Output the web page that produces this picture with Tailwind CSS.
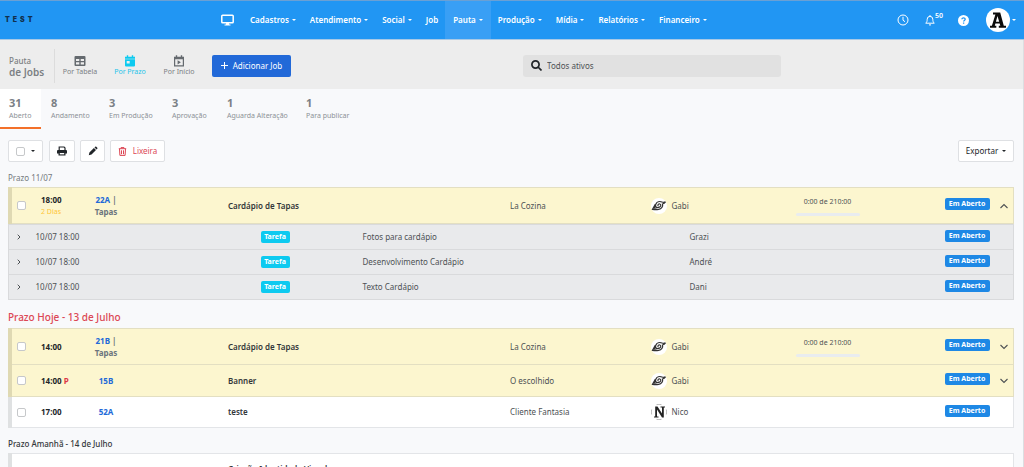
<!DOCTYPE html>
<html lang="pt-BR">
<head>
<meta charset="utf-8">
<meta name="viewport" content="width=device-width, initial-scale=1">
<title>Pauta de Jobs</title>
<script src="https://cdn.jsdelivr.net/npm/@tailwindcss/browser@4"></script>
</head>
<body class="bg-[#f8f9fb] font-['Noto_Sans','Open_Sans',sans-serif] text-[8px] leading-[12px] text-[#4d5154]">

<svg class="hidden" aria-hidden="true">
  <symbol id="caret" viewBox="0 0 4 2"><path d="M0 0h4L2 2z" fill="currentColor"/></symbol>
  <symbol id="down" viewBox="0 0 8 6"><path d="M.5 1 4 4.500 7.500 1" fill="none" stroke="currentColor" stroke-width="1.1"/></symbol>
  <symbol id="up" viewBox="0 0 8 6"><path d="M.5 5 4 1.500 7.500 5" fill="none" stroke="currentColor" stroke-width="1.1"/></symbol>
  <symbol id="right" viewBox="0 0 4 6"><path d="M.7.700 3 3 .7 5.300" fill="none" stroke="currentColor" stroke-width="1"/></symbol>
  <symbol id="leaf" viewBox="0 0 16 16">
    <circle cx="8" cy="8" r="8" fill="#fff"/>
    <path d="M4.300 6.200 1.500 11.400c2 .3 4.300.3 6.100 0 3-.6 4.600-3 3.900-5.400 1.200-.3 2.200-1 3-2.200-1.200.8-2.400.7-3.600.2C8.600 3.100 5.800 3.800 4.800 6.300c-.6 1.500 0 3 1.500 3.200 1.700.3 3.500-.9 3.500-2.300 0-1.300-1.700-1.600-2.500-.8-.6.6-.5 1.400.2 1.500M4.100 8.200 3.200 10.200c1.200.1 2.200 0 2.900-.6" fill="none" stroke="#333" stroke-width="1.200"/>
  </symbol>
</svg>

<header class="flex h-10 items-stretch border-t border-b border-t-[#6aa0d4] border-b-[#a9c9e6] bg-[#2196f3] font-semibold text-white">
  <a href="#" class="flex w-[213px] items-center pl-[5px] font-['Inter',sans-serif] text-[7px] font-black tracking-[3px] text-[#12304d]">TEST</a>
  <nav class="flex flex-1 items-stretch">
    <a href="#" aria-label="Painel" class="flex w-[29px] items-center pl-2">
      <svg class="h-3 w-[13px]" viewBox="0 0 13 12"><rect x=".8" y="1.300" width="11.400" height="7.400" rx=".8" fill="none" stroke="#fff" stroke-width="1.500"/><path d="M5.300 8.500h2.400l.5 2.100H9.500v1h-6v-1h1.300z" fill="#fff"/></svg>
    </a>
    <a href="#" class="flex items-center gap-[3px] pr-[7px] pl-2">Cadastros<svg class="h-[2px] w-1"><use href="#caret"/></svg></a>
    <a href="#" class="flex items-center gap-[3px] px-[7px]">Atendimento<svg class="h-[2px] w-1"><use href="#caret"/></svg></a>
    <a href="#" class="flex items-center gap-[3px] px-[7px]">Social<svg class="h-[2px] w-1"><use href="#caret"/></svg></a>
    <a href="#" class="flex items-center px-[7px]">Job</a>
    <a href="#" class="flex items-center gap-[3px] bg-[#399ff5] px-2">Pauta<svg class="h-[2px] w-1"><use href="#caret"/></svg></a>
    <a href="#" class="flex items-center gap-[3px] px-[7px]">Produção<svg class="h-[2px] w-1"><use href="#caret"/></svg></a>
    <a href="#" class="flex items-center gap-[3px] px-[7px]">Mídia<svg class="h-[2px] w-1"><use href="#caret"/></svg></a>
    <a href="#" class="flex items-center gap-[3px] px-[7px]">Relatórios<svg class="h-[2px] w-1"><use href="#caret"/></svg></a>
    <a href="#" class="flex items-center gap-[3px] px-[7px]">Financeiro<svg class="h-[2px] w-1"><use href="#caret"/></svg></a>
  </nav>
  <div class="flex items-center pr-2">
    <button aria-label="Histórico" class="w-7"><svg class="size-3" viewBox="0 0 12 12" fill="none" stroke="#fff"><circle cx="6" cy="6" r="5"/><path d="M6 2.800v3.400l2 1.500"/></svg></button>
    <button aria-label="Notificações" class="flex w-[33px] items-center"><svg class="h-3 w-[10px]" viewBox="0 0 10 12" fill="none" stroke="#fff"><path d="M.7 9.200c1.100-1 1.500-2 1.500-4a2.800 2.800 0 0 1 5.600 0c0 2 .4 3 1.500 4zM4 10.900h2M5 1v1.300"/></svg><span class="pb-2 text-[7px] leading-[8px]">50</span></button>
    <button aria-label="Ajuda" class="flex w-[28px] items-center"><svg class="size-[11px]" viewBox="0 0 11 11"><circle cx="5.500" cy="5.500" r="5.500" fill="#fff"/><path d="M3.900 4.300c0-2 3.300-2 3.300 0 0 1.100-1.600 1.200-1.600 2.300M5.600 7.500v1.200" stroke="#2196f3" stroke-width="1.300" fill="none"/></svg></button>
    <button aria-label="Conta" class="flex items-center gap-[2px]"><span class="flex size-6 items-center justify-center rounded-full bg-white"><svg class="h-[18px] w-4" viewBox="0 0 16 18" fill="#0b0b0b"><path fill-rule="evenodd" d="M3 1.500h7.200l3.600 13.300H16v2H8.800v-2h1.500l-.6-2.300H5.400l-.6 2.300h1.500v2H0v-2h1.900L5.400 3.400H3zM7.500 5l-1.600 5.700h3.300z"/></svg></span><svg class="h-[2px] w-1"><use href="#caret"/></svg></button>
  </div>
</header>

<div class="border-r border-[#dcdee1]">
<div class="flex h-[49px] items-center bg-[#ededed] pt-[2px] text-[#7b7f83]">
  <h1 class="ml-[9px] w-[45px] font-medium">Pauta<span class="block text-[10px] leading-[10px] font-semibold">de Jobs</span></h1>
  <div class="h-[34px] w-px bg-[#dcdcdc]"></div>
  <a href="#" class="ml-2 flex w-[34px] flex-col items-center text-[7px] leading-[10px] whitespace-nowrap"><svg class="size-3" viewBox="0 0 12 12"><path fill-rule="evenodd" d="M1.500 1h9q1 0 1 1v8q0 1-1 1h-9q-1 0-1-1V2q0-1 1-1zM2 4v2h3.300V4zM6.700 4v2H10V4zM2 7.300v2.200h3.300V7.300zM6.700 7.300v2.200H10V7.300z" fill="#656a6f"/></svg>Por Tabela</a>
  <a href="#" class="ml-[16px] flex w-[34px] flex-col items-center text-[7px] leading-[10px] whitespace-nowrap text-[#25c4ea]"><svg class="size-3" viewBox="0 0 12 12"><path d="M1 1.700h1.800V.3h1.400v1.400h3.600V.3h1.400v1.400H11v2H1zM1 4.300h10V10.500q0 1-1 1H2q-1 0-1-1z" fill="#0dcaf0"/><path d="M2.700 6h3v2.500h-3z" fill="#ededed"/></svg>Por Prazo</a>
  <a href="#" class="ml-[15px] flex w-[34px] flex-col items-center text-[7px] leading-[10px] whitespace-nowrap"><svg class="size-3" viewBox="0 0 12 12"><path d="M1.600 3.500h8.800v7.400H1.600z" fill="none" stroke="#656a6f" stroke-width="1.200"/><path d="M1 1.700h1.800V.3h1.400v1.400h3.600V.3h1.400v1.400H11v2.500H1zM4.600 5.200l3.300 2.100-3.300 2.100z" fill="#656a6f"/></svg>Por Início</a>
  <button class="ml-[16px] flex h-[22px] w-[79px] items-center justify-center gap-[5px] rounded-[2px] bg-[#2269d8] text-white whitespace-nowrap"><svg class="size-[7px]" viewBox="0 0 7 7"><path d="M3.500 0v7M0 3.500h7" stroke="#fff"/></svg>Adicionar Job</button>
  <label class="mr-[242px] ml-auto flex h-[22px] w-[258px] items-center gap-[5px] rounded-[3px] bg-[#e1e1e1] px-2"><svg class="size-[11px]" viewBox="0 0 11 11" fill="none" stroke="#212529" stroke-width="1.700"><circle cx="4.500" cy="4.500" r="3.600"/><path d="m7 7 3.500 3.500"/></svg><input type="text" aria-label="Buscar" value="Todos ativos" class="min-w-0 flex-1 bg-transparent text-[#4d5154] outline-none"></label>
</div>

<nav class="flex h-10 text-[7px] leading-[12px] text-[#8c9196]">
  <a href="#" class="mr-[10px] w-[41px] border-b-2 border-[#f3702a] bg-white pt-[7px] pl-[9px]"><b class="block text-[11px] leading-[14px] text-[#7b8085]">31</b>Aberto</a>
  <a href="#" class="w-[58px] pt-[7px]"><b class="block text-[11px] leading-[14px] text-[#7b8085]">8</b>Andamento</a>
  <a href="#" class="w-[63px] pt-[7px]"><b class="block text-[11px] leading-[14px] text-[#7b8085]">3</b>Em Produção</a>
  <a href="#" class="w-[55px] pt-[7px]"><b class="block text-[11px] leading-[14px] text-[#7b8085]">3</b>Aprovação</a>
  <a href="#" class="w-[79px] pt-[7px]"><b class="block text-[11px] leading-[14px] text-[#7b8085]">1</b>Aguarda Alteração</a>
  <a href="#" class="pt-[7px]"><b class="block text-[11px] leading-[14px] text-[#7b8085]">1</b>Para publicar</a>
</nav>

<main class="pr-[9px] pl-2">
  <div class="mt-[11px] flex h-[22px] items-stretch text-[#212529]">
    <div class="flex w-[35px] items-center gap-[6px] rounded-[2px] border border-[#dee0e3] bg-white pl-[7px]"><input type="checkbox" aria-label="Selecionar todos" class="size-[9px] appearance-none rounded-[2px] border border-[#c6c8ca] bg-white"><button aria-label="Opções de seleção"><svg class="h-[2px] w-1"><use href="#caret"/></svg></button></div>
    <button aria-label="Imprimir" class="ml-[6px] flex w-[26px] items-center justify-center rounded-[2px] border border-[#dee0e3] bg-white"><svg class="size-[10px]" viewBox="0 0 10 10"><path d="M2.200 4V1h4.900l.9.900V4" fill="none" stroke="#212529" stroke-width="1.200"/><path d="M0 5q0-1 1-1h8q1 0 1 1v2.500H8.500V9.500h-7V7.500H0z" fill="#212529"/><path d="M2.800 7h4.400v1.400H2.800z" fill="#fff"/></svg></button>
    <button aria-label="Editar" class="ml-[5px] flex w-[25px] items-center justify-center rounded-[2px] border border-[#dee0e3] bg-white"><svg class="size-[10px]" viewBox="0 0 10 10" fill="#212529"><path d="M.8 9.200 1.400 6.500 5.900 2l2.100 2.100-4.500 4.500zM6.500 1.400l.7-.7q.6-.4 1.100 0l1 1q.4.500 0 1.100l-.7.700z"/></svg></button>
    <button class="ml-[5px] flex w-[55px] items-center justify-center gap-[6px] rounded-[2px] border border-[#dee0e3] bg-white text-[#dc4754]"><svg class="size-[9px]" viewBox="0 0 9 9" fill="none" stroke="#dc4754"><path d="M.8 1.700h7.400M3 1.500V.6h3v.9M1.500 2l.4 6.400h5.200L7.500 2M3.500 3.300v3.900M5.500 3.300v3.900"/></svg>Lixeira</button>
    <button class="ml-auto flex w-[56px] items-center justify-center gap-1 rounded-[2px] border border-[#dee0e3] bg-white">Exportar<svg class="h-[2px] w-1"><use href="#caret"/></svg></button>
  </div>

  <h2 class="mt-[10px] mb-[3px] text-[#74797e]">Prazo 11/07</h2>
  <table class="w-full table-fixed border-collapse">
    <colgroup><col class="w-7"><col class="w-[41px]"><col class="w-[58px]"><col><col class="w-[14%]"><col class="w-[145px]"><col class="w-[74px]"><col class="w-[130px]"><col class="w-[19px]"></colgroup>
    <tbody>
      <tr class="h-9 border border-[#e3dfc2] bg-[#fcf6cf]">
        <td class="border-l-4 border-[#dfd9b3] pl-[5px]"><input type="checkbox" aria-label="22A" class="block size-[9px] appearance-none rounded-[2px] border border-[#c6c8ca] bg-white"></td>
        <td class="pl-[3px] font-bold text-[#212529]">18:00<span class="block text-[7px] font-normal text-[#ffc63a]">2 Dias</span></td>
        <td class="pr-1 text-center font-bold text-[#6c757d]"><a href="#" class="text-[#2269d8]">22A</a> |<br>Tapas</td>
        <td class="pl-[91px] font-semibold text-[#33373a]">Cardápio de Tapas</td>
        <td class="pl-[5px]">La Cozina</td>
        <td class="pl-[5px]"><span class="flex items-center gap-[5px]"><svg class="size-4"><use href="#leaf"/></svg>Gabi</span></td>
        <td class="px-[5px] text-center text-[7px]">0:00 de 210:00<span class="mt-[5px] block h-[3px] rounded-full bg-[#e9ecef]"></span></td>
        <td class="pr-[5px] pb-[3px]"><span class="ml-auto block h-3 w-[45px] rounded-[2px] bg-[#1e88e5] text-center text-[7px] font-bold text-white">Em Aberto</span></td>
        <td><button aria-label="Recolher" class="block pl-[5px]"><svg class="h-[6px] w-2"><use href="#up"/></svg></button></td>
      </tr>
    </tbody>
  </table>
  <table class="w-full table-fixed border-collapse">
    <colgroup><col class="w-[22px]"><col class="w-[230px]"><col class="w-[98px]"><col><col class="w-[255px]"><col class="w-[69px]"></colgroup>
    <tbody>
      <tr class="h-[25px] border border-[#d9dadc] bg-[#e9eaec]"><td class="pl-[8px]"><svg class="h-[6px] w-1"><use href="#right"/></svg></td><td class="pl-[5px]">10/07 18:00</td><td><span class="block h-3 w-[29px] rounded-[2px] bg-[#0dcaf0] text-center text-[7px] font-bold text-white">Tarefa</span></td><td class="pl-1">Fotos para cardápio</td><td>Grazi</td><td class="pb-[2px]"><span class="block h-3 w-[45px] rounded-[2px] bg-[#1e88e5] text-center text-[7px] font-bold text-white">Em Aberto</span></td></tr>
      <tr class="h-[25px] border border-[#d9dadc] bg-[#e9eaec]"><td class="pl-[8px]"><svg class="h-[6px] w-1"><use href="#right"/></svg></td><td class="pl-[5px]">10/07 18:00</td><td><span class="block h-3 w-[29px] rounded-[2px] bg-[#0dcaf0] text-center text-[7px] font-bold text-white">Tarefa</span></td><td class="pl-1">Desenvolvimento Cardápio</td><td>André</td><td class="pb-[2px]"><span class="block h-3 w-[45px] rounded-[2px] bg-[#1e88e5] text-center text-[7px] font-bold text-white">Em Aberto</span></td></tr>
      <tr class="h-[25px] border border-[#d9dadc] bg-[#e9eaec]"><td class="pl-[8px]"><svg class="h-[6px] w-1"><use href="#right"/></svg></td><td class="pl-[5px]">10/07 18:00</td><td><span class="block h-3 w-[29px] rounded-[2px] bg-[#0dcaf0] text-center text-[7px] font-bold text-white">Tarefa</span></td><td class="pl-1">Texto Cardápio</td><td>Dani</td><td class="pb-[2px]"><span class="block h-3 w-[45px] rounded-[2px] bg-[#1e88e5] text-center text-[7px] font-bold text-white">Em Aberto</span></td></tr>
    </tbody>
  </table>

  <h2 class="mt-[10px] mb-1 text-[10px] leading-[14px] font-medium text-[#dc4754]">Prazo Hoje - 13 de Julho</h2>
  <table class="w-full table-fixed border-collapse">
    <colgroup><col class="w-7"><col class="w-[41px]"><col class="w-[58px]"><col><col class="w-[14%]"><col class="w-[145px]"><col class="w-[74px]"><col class="w-[130px]"><col class="w-[19px]"></colgroup>
    <tbody>
      <tr class="h-9 border border-[#e3dfc2] bg-[#fcf6cf]">
        <td class="border-l-4 border-[#dfd9b3] pl-[5px]"><input type="checkbox" aria-label="21B" class="block size-[9px] appearance-none rounded-[2px] border border-[#c6c8ca] bg-white"></td>
        <td class="pl-[3px] font-bold text-[#212529]">14:00</td>
        <td class="pr-1 text-center font-bold text-[#6c757d]"><a href="#" class="text-[#2269d8]">21B</a> |<br>Tapas</td>
        <td class="pl-[91px] font-semibold text-[#33373a]">Cardápio de Tapas</td>
        <td class="pl-[5px]">La Cozina</td>
        <td class="pl-[5px]"><span class="flex items-center gap-[5px]"><svg class="size-4"><use href="#leaf"/></svg>Gabi</span></td>
        <td class="px-[5px] text-center text-[7px]">0:00 de 210:00<span class="mt-[5px] block h-[3px] rounded-full bg-[#e9ecef]"></span></td>
        <td class="pr-[5px] pb-[3px]"><span class="ml-auto block h-3 w-[45px] rounded-[2px] bg-[#1e88e5] text-center text-[7px] font-bold text-white">Em Aberto</span></td>
        <td><button aria-label="Expandir" class="block pl-[5px]"><svg class="h-[6px] w-2"><use href="#down"/></svg></button></td>
      </tr>
      <tr class="h-8 border border-[#e3dfc2] bg-[#fcf6cf]">
        <td class="border-l-4 border-[#dfd9b3] pl-[5px]"><input type="checkbox" aria-label="15B" class="block size-[9px] appearance-none rounded-[2px] border border-[#c6c8ca] bg-white"></td>
        <td class="pl-[3px] font-bold whitespace-nowrap text-[#212529]">14:00 <span class="text-[#dc3545]">P</span></td>
        <td class="pr-1 text-center font-bold"><a href="#" class="text-[#2269d8]">15B</a></td>
        <td class="pl-[91px] font-semibold text-[#33373a]">Banner</td>
        <td class="pl-[5px]">O escolhido</td>
        <td class="pl-[5px]"><span class="flex items-center gap-[5px]"><svg class="size-4"><use href="#leaf"/></svg>Gabi</span></td>
        <td></td>
        <td class="pr-[5px] pb-[3px]"><span class="ml-auto block h-3 w-[45px] rounded-[2px] bg-[#1e88e5] text-center text-[7px] font-bold text-white">Em Aberto</span></td>
        <td><button aria-label="Expandir" class="block pl-[5px]"><svg class="h-[6px] w-2"><use href="#down"/></svg></button></td>
      </tr>
      <tr class="h-[31px] border border-[#e3e5e8] bg-white">
        <td class="border-l-4 border-[#dfe1e2] pl-[5px]"><input type="checkbox" aria-label="52A" class="block size-[9px] appearance-none rounded-[2px] border border-[#c6c8ca] bg-white"></td>
        <td class="pl-[3px] font-bold text-[#212529]">17:00</td>
        <td class="pr-1 text-center font-bold"><a href="#" class="text-[#2269d8]">52A</a></td>
        <td class="pl-[91px] font-semibold text-[#33373a]">teste</td>
        <td class="pl-[5px]">Cliente Fantasia</td>
        <td class="pl-[5px]"><span class="flex items-center gap-[5px]"><svg class="size-4" viewBox="0 0 16 16"><path d="M5.500.7q2.500-.8 5 0M5.500 15.300q2.500.8 5 0M.7 5.500q-.8 2.500 0 5M15.300 5.500q.8 2.500 0 5" fill="none" stroke="#bbb"/><path d="M3 2.500h3.500l4.500 7v-6H9.500v-1H14v1h-1.200v10H11l-5-8v7h1.500v1H3v-1h1.200v-10H3z" fill="#222"/></svg>Nico</span></td>
        <td></td>
        <td class="pr-[5px] pb-[3px]"><span class="ml-auto block h-3 w-[45px] rounded-[2px] bg-[#1e88e5] text-center text-[7px] font-bold text-white">Em Aberto</span></td>
        <td></td>
      </tr>
    </tbody>
  </table>

  <h2 class="mt-[10px] mb-[3px] font-medium text-[#33373a]">Prazo Amanhã - 14 de Julho</h2>
  <table class="w-full table-fixed border-collapse">
    <colgroup><col class="w-7"><col class="w-[99px]"><col></colgroup>
    <tbody>
      <tr class="h-[30px] border border-[#e3e5e8] bg-white">
        <td class="border-l-4 border-[#dfe1e2]"></td>
        <td></td>
        <td class="pl-[91px] font-semibold text-[#33373a]">Criação Identidade Visual</td>
      </tr>
    </tbody>
  </table>
</main>
</div>
</body>
</html>
